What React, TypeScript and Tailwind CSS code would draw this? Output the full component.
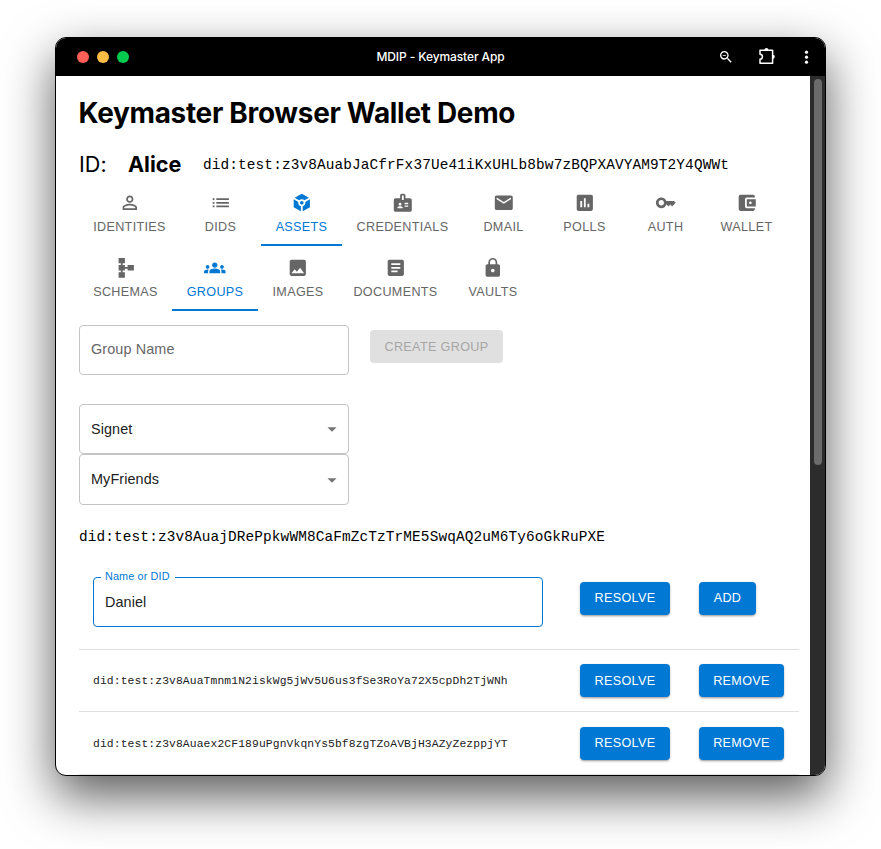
import type { ReactNode } from "react";
import type { IconType } from "react-icons";
import {
  MdAccountBalanceWallet,
  MdArrowDropDown,
  MdArticle,
  MdBadge,
  MdEmail,
  MdGroups,
  MdImage,
  MdKey,
  MdList,
  MdLock,
  MdPermIdentity,
  MdPoll,
  MdSchema,
  MdToken,
  MdZoomOut,
} from "react-icons/md";

type TabItem = { label: string; icon: IconType; width: string; active?: boolean };

const mainTabs: TabItem[] = [
  { label: "IDENTITIES", icon: MdPermIdentity, width: "w-[101px]" },
  { label: "DIDS", icon: MdList, width: "w-[81px]" },
  { label: "ASSETS", icon: MdToken, width: "w-[81px]", active: true },
  { label: "CREDENTIALS", icon: MdBadge, width: "w-[121px]" },
  { label: "DMAIL", icon: MdEmail, width: "w-[81px]" },
  { label: "POLLS", icon: MdPoll, width: "w-[81px]" },
  { label: "AUTH", icon: MdKey, width: "w-[81px]" },
  { label: "WALLET", icon: MdAccountBalanceWallet, width: "w-[81px]" },
];

const assetTabs: TabItem[] = [
  { label: "SCHEMAS", icon: MdSchema, width: "w-[93px]" },
  { label: "GROUPS", icon: MdGroups, width: "w-[86px]", active: true },
  { label: "IMAGES", icon: MdImage, width: "w-[80px]" },
  { label: "DOCUMENTS", icon: MdArticle, width: "w-[115px]" },
  { label: "VAULTS", icon: MdLock, width: "w-[80px]" },
];

const members = [
  "did:test:z3v8AuaTmnm1N2iskWg5jWv5U6us3fSe3RoYa72X5cpDh2TjWNh",
  "did:test:z3v8Auaex2CF189uPgnVkqnYs5bf8zgTZoAVBjH3AZyZezppjYT",
];

function Tabs({ items }: { items: TabItem[] }) {
  return (
    <div className="flex h-[65px]">
      {items.map(({ label, icon: Icon, width, active }) => (
        <button
          key={label}
          className={`${width} flex shrink-0 flex-col items-center border-b-2 pt-[11px] ${
            active ? "border-[#0078d4] text-[#0078d4]" : "border-transparent text-[#666666]"
          }`}
        >
          <Icon className="size-[21.6px]" />
          <span className="mt-[5px] text-[12.6px] leading-4 tracking-[0.34px] whitespace-nowrap">{label}</span>
        </button>
      ))}
    </div>
  );
}

function Button({ children, className = "" }: { children: ReactNode; className?: string }) {
  return (
    <button
      className={`flex h-[33px] shrink-0 items-center justify-center rounded-[4px] bg-[#0078d4] text-[12.6px] leading-4 tracking-[0.34px] text-white shadow-[0_2px_2px_-1px_rgba(0,0,0,0.25),0_1px_3px_rgba(0,0,0,0.2)] ${className}`}
    >
      {children}
    </button>
  );
}

function Select({ value, className }: { value: string; className: string }) {
  return (
    <div
      className={`flex w-[270px] items-center justify-between rounded-[4px] border border-[#c4c4c4] pr-[5px] pl-[11px] text-[14.4px] text-[#212121] ${className}`}
    >
      <span className="tracking-[0.1px]">{value}</span>
      <MdArrowDropDown className="size-[22px] text-[#757575]" />
    </div>
  );
}

function TitleBar() {
  return (
    <div className="flex h-[38px] shrink-0 items-center bg-black text-white">
      <div className="flex w-[240px] gap-2 pl-[21px]">
        <span className="size-3 rounded-full bg-[#ff5f57]" />
        <span className="size-3 rounded-full bg-[#ffbd44]" />
        <span className="size-3 rounded-full bg-[#00ca4e]" />
      </div>
      <div className="flex-1 text-center font-['Inter'] text-[12px] leading-4 font-medium tracking-[-0.1px]">
        MDIP - Keymaster App
      </div>
      <div className="flex w-[240px] items-center justify-end pr-[16px]">
        <MdZoomOut className="size-4" />
        <svg className="mb-[2px] ml-[24px] size-[18px]" viewBox="0 0 18 18" fill="none">
          <path
            d="M2 3.2h12.6v13H2v-4c3.2 0 3.2-5 0-5z"
            stroke="currentColor"
            strokeWidth="1.5"
            strokeLinejoin="round"
          />
          <path d="M6.4 3a2 2 0 0 1 4 0zM14.8 7.7a2 2 0 0 1 0 4z" fill="currentColor" />
        </svg>
        <svg className="ml-[28px] h-[14px] w-[5px]" viewBox="0 0 5 14" fill="currentColor">
          <circle cx="2.5" cy="2.2" r="1.6" />
          <circle cx="2.5" cy="7.2" r="1.6" />
          <circle cx="2.5" cy="12.2" r="1.6" />
        </svg>
      </div>
    </div>
  );
}

export default function App() {
  return (
    <div className="h-[849px] w-[881px] overflow-hidden bg-white pt-[37px] pl-[55px] font-['Liberation_Sans',Arial,sans-serif]">
      <div className="flex h-[739px] w-[771px] flex-col overflow-hidden rounded-[11px] border border-black bg-white shadow-[0_20px_50px_rgba(0,0,0,0.65)]">
        <TitleBar />
        <div className="flex min-h-0 flex-1">
          <main className="min-w-0 flex-1 overflow-hidden pt-[17px] pl-[23px]">
            <h1 className="-ml-[0.5px] h-10 font-['Inter'] text-[27.9px] leading-10 font-bold tracking-[-0.28px] whitespace-nowrap text-black">
              Keymaster Browser Wallet Demo
            </h1>
            <div className="mt-[15px] flex h-8 items-center font-['Inter'] text-[21.6px] text-black">
              <span className="w-[49px] [font-feature-settings:'calt'_0]">ID:</span>
              <span className="w-[75px] font-bold">Alice</span>
              <span className="mt-[3px] font-['Liberation_Mono',monospace] text-[14.4px] tracking-[0.13px]">
                did:test:z3v8AuabJaCfrFx37Ue41iKxUHLb8bw7zBQPXAVYAM9T2Y4QWWt
              </span>
            </div>
            <div className="mt-px">
              <Tabs items={mainTabs} />
              <Tabs items={assetTabs} />
            </div>

            <div className="mt-[14px] flex items-start">
              <div className="flex h-[50px] w-[270px] items-center rounded-[4px] border border-[#c4c4c4] pl-[11px] text-[14.4px] tracking-[0.12px] text-[#666666]">
                Group Name
              </div>
              <div className="mt-[5px] ml-[21px] flex h-[33px] w-[133px] items-center justify-center rounded-[4px] bg-[#e0e0e0] pt-px text-[12.6px] leading-4 tracking-[0.36px] text-[#a6a6a6]">
                CREATE GROUP
              </div>
            </div>

            <div className="mt-[29px]">
              <Select value="Signet" className="h-[50px] [&>span]:mt-px" />
              <Select value="MyFriends" className="h-[51px]" />
            </div>

            <div className="mt-[22px] h-5 font-['Liberation_Mono',monospace] text-[14.4px] leading-5 tracking-[0.13px] text-black">
              did:test:z3v8AuajDRePpkwWM8CaFmZcTzTrME5SwqAQ2uM6Ty6oGkRuPXE
            </div>

            <div className="mt-[22px] w-[720px]">
              <div className="flex h-[81px] items-start border-b border-[#e0e0e0] pt-[8px] pl-[14px]">
                <div className="relative flex h-[50px] w-[450px] items-center rounded-[4px] border border-[#0078d4] pt-px pl-[11px] text-[14.4px] tracking-[0.1px] text-[#212121]">
                  <span className="absolute top-[-10px] left-[7px] bg-white pr-[5px] pl-[4px] text-[10.8px] leading-4 tracking-[0.15px] text-[#0078d4]">
                    Name or DID
                  </span>
                  Daniel
                </div>
                <Button className="mt-[5px] ml-[37px] w-[90px] pb-px">RESOLVE</Button>
                <Button className="mt-[5px] ml-[29px] w-[57px] pb-px">ADD</Button>
              </div>
              {members.map((did, index) => (
                <div
                  key={did}
                  className={`flex items-start border-b border-[#e0e0e0] pl-[14px] ${
                    index === 0 ? "h-[62px] pt-[14px]" : "h-[63px] pt-[15px]"
                  }`}
                >
                  <span className="mt-[9px] w-[487px] font-['Liberation_Mono',monospace] text-[11.34px] leading-4 tracking-[0.115px] text-[#212121]">
                    {did}
                  </span>
                  <Button className={index === 0 ? "w-[90px] pt-px" : "w-[90px] pb-px"}>RESOLVE</Button>
                  <Button className={index === 0 ? "ml-[29px] w-[85px] pt-px" : "ml-[29px] w-[85px] pb-px"}>
                    REMOVE
                  </Button>
                </div>
              ))}
            </div>
          </main>
          <div className="flex w-[15px] shrink-0 justify-center bg-[#2c2c2c] pt-[3px]">
            <div className="h-[386px] w-2 rounded-full bg-[#6b6b6b]" />
          </div>
        </div>
      </div>
    </div>
  );
}
